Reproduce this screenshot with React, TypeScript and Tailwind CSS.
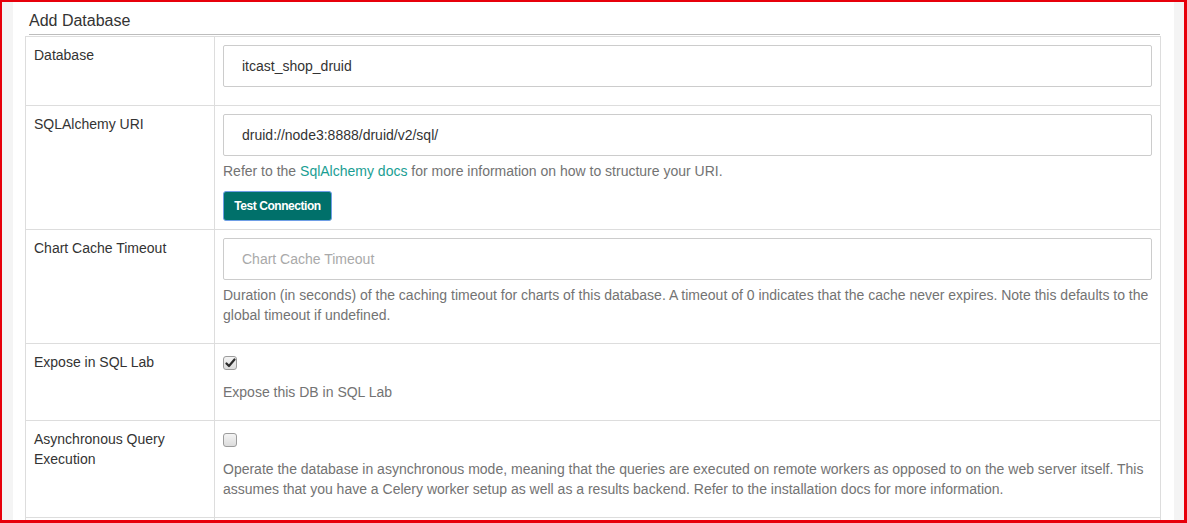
import React from 'react';

function Checkbox({ checked }: { checked?: boolean }) {
  return (
    <div className="h-[25px] pt-[4px]">
      <div className="w-[14px] h-[14px] rounded-[3px] border border-[#9c9c9c] bg-gradient-to-b from-[#f4f4f4] to-[#dcdcdc] flex items-center justify-center">
        {checked && (
          <svg width="11" height="10" viewBox="0 0 11 10">
            <path d="M1.5 5.5 L4 8 L9.5 1.5" fill="none" stroke="#2b2b2b" strokeWidth="2.2" strokeLinecap="round" strokeLinejoin="round" />
          </svg>
        )}
      </div>
    </div>
  );
}

function Input({ value, placeholder }: { value?: string; placeholder?: string }) {
  return (
    <div className="h-[42px] w-full border border-[#cccccc] rounded-[2px] bg-white flex items-center px-[18px] text-[14px]">
      {value ? (
        <span className="text-[#333]">{value}</span>
      ) : (
        <span className="text-[#a9a9a9]">{placeholder}</span>
      )}
    </div>
  );
}

function Help({ children }: { children: React.ReactNode }) {
  return <p className="mt-[5px] mb-[10px] text-[14px] leading-[20px] text-[#737373]">{children}</p>;
}

function Row({ label, first, children }: { label: React.ReactNode; first?: boolean; children: React.ReactNode }) {
  return (
    <div className={`flex ${first ? '' : 'border-t border-[#dddddd]'}`}>
      <div className="w-[188px] shrink-0 p-[8px] text-[14px] leading-[20px] text-[#333]">{label}</div>
      <div className="flex-1 border-l border-[#dddddd] p-[8px]">{children}</div>
    </div>
  );
}

export default function App() {
  return (
    <div
      className="w-[1187px] h-[523px] overflow-hidden bg-[#f4f4f4] border-red-600 border-t-2 border-l-2 border-r-[3px] border-b-[3px] flex"
      style={{ fontFamily: '"Liberation Sans", Arial, sans-serif' }}
    >
      <div className="ml-[11px] w-[1161px] h-full bg-white">
        {/* Title */}
        <div className="ml-[16px] mr-[14px] pt-[9px] pb-[3px] border-b border-[#bdbdbd]">
          <h1 className="text-[16px] leading-[20px] text-[#333]">Add Database</h1>
        </div>

        {/* Form table */}
        <div className="ml-[12px] mt-[1px] w-[1136px] border border-[#dddddd]">
          <Row label="Database" first>
            <div className="mb-[10px]">
              <Input value="itcast_shop_druid" />
            </div>
          </Row>

          <Row label="SQLAlchemy URI">
            <Input value="druid://node3:8888/druid/v2/sql/" />
            <Help>
              Refer to the <span className="text-[#1a9e93]">SqlAlchemy docs</span> for more information on how to structure your URI.
            </Help>
            <button className="h-[30px] w-[109px] rounded-[3px] border border-[#6f9ee6] bg-[#00706a] text-white text-[12px] font-bold tracking-[-0.45px]">
              Test Connection
            </button>
          </Row>

          <Row label="Chart Cache Timeout">
            <Input placeholder="Chart Cache Timeout" />
            <Help>
              Duration (in seconds) of the caching timeout for charts of this database. A timeout of 0 indicates that the cache never expires. Note this defaults to the global timeout if undefined.
            </Help>
          </Row>

          <Row label="Expose in SQL Lab">
            <Checkbox checked />
            <Help>Expose this DB in SQL Lab</Help>
          </Row>

          <Row label="Asynchronous Query Execution">
            <Checkbox />
            <Help>
              Operate the database in asynchronous mode, meaning that the queries are executed on remote workers as opposed to on the web server itself. This assumes that you have a Celery worker setup as well as a results backend. Refer to the installation docs for more information.
            </Help>
          </Row>

          <Row label="">
            <div className="h-[40px]" />
          </Row>
        </div>
      </div>
    </div>
  );
}
